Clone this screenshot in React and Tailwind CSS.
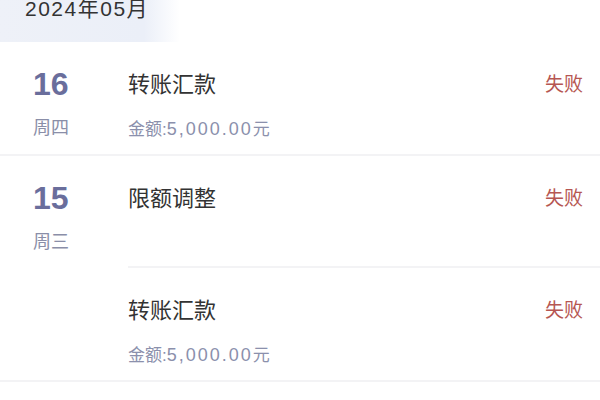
const FONT = { fontFamily: '"Liberation Sans", "Noto Sans CJK SC", sans-serif' }

const DAYS = [
  {
    day: '16', week: '周四',
    items: [{ title: '转账汇款', amount: '5,000.00', status: '失败' }],
  },
  {
    day: '15', week: '周三',
    items: [
      { title: '限额调整', status: '失败' },
      { title: '转账汇款', amount: '5,000.00', status: '失败' },
    ],
  },
]

function Record({ item, last }) {
  return (
    <div className={`h-[112px] flex justify-between pt-[30px] pr-[17px] ${last ? '' : 'border-b-2 border-[#f3f3f5]'}`}>
      <div>
        <div className="text-[22px] leading-[26px] text-[#333333]">{item.title}</div>
        {item.amount && (
          <div className="mt-[20px] text-[17px] leading-[22px] text-[#8b90ac]">
            金额:<span className="text-[18px] tracking-[2px]">{item.amount}</span>元
          </div>
        )}
      </div>
      <div className="text-[19px] leading-[26px] text-[#b65652]">{item.status}</div>
    </div>
  )
}

export default function App() {
  return (
    <div className="w-[600px] h-[400px] overflow-hidden bg-white" style={FONT}>
      <div className="h-[42px] w-[180px] bg-gradient-to-r from-[#eef1f8] via-[#ebeff8] via-80% to-white pl-[25px] overflow-hidden">
        <div className="-mt-[4px] text-[21px] leading-[26px] tracking-[1.5px] text-[#333333]">2024年05月</div>
      </div>
      {DAYS.map(d => (
        <div key={d.day} className="flex border-b-2 border-[#f3f3f5]">
          <div className="w-[128px] shrink-0 pl-[33px] pt-[24px]">
            <div className="text-[32px] leading-[36px] font-semibold text-[#6a6e9c]">{d.day}</div>
            <div className="mt-[15px] text-[18px] leading-[22px] text-[#8a8ea8]">{d.week}</div>
          </div>
          <div className="flex-1">
            {d.items.map((it, i) => (
              <Record key={i} item={it} last={i === d.items.length - 1} />
            ))}
          </div>
        </div>
      ))}
    </div>
  )
}
